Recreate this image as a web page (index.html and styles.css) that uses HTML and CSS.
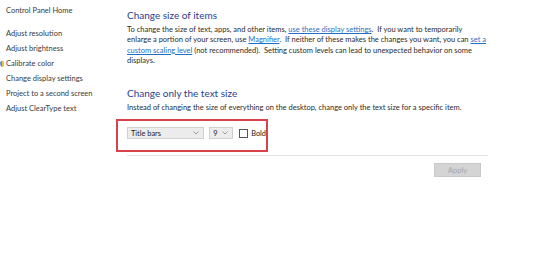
FILE: index.html
```html
<!DOCTYPE html>
<html>
<head>
<meta charset="utf-8">
<link rel="stylesheet" href="styles.css">
</head>
<body>
<div class="page">
  <nav class="side">
    <div class="home">Control Panel Home</div>
    <ul class="links">
      <li>Adjust resolution</li>
      <li>Adjust brightness</li>
      <li class="shield-item"><svg class="shield" width="4" height="6" viewBox="0 0 5 8"><path d="M0 1 L2.5 0 L5 1 L5 4 Q5 7 2.5 8 Q0 7 0 4 Z" fill="#3a6fc0"/><path d="M2.5 0 L5 1 L5 4 Q5 7 2.5 8 Z" fill="#e6b422"/></svg>Calibrate color</li>
      <li>Change display settings</li>
      <li>Project to a second screen</li>
      <li>Adjust ClearType text</li>
    </ul>
  </nav>
  <main class="main">
    <h1 class="title">Change size of items</h1>
    <p class="text">To change the size of text, apps, and other items, <a class="lnk">use these display settings</a>.&nbsp; If you want to temporarily<br>enlarge a portion of your screen, use <a class="lnk">Magnifier</a>.&nbsp; If neither of these makes the changes you want, you can <a class="lnk">set a<br>custom scaling level</a> (not recommended).&nbsp; Setting custom levels can lead to unexpected behavior on some<br>displays.</p>
    <h2 class="title title2">Change only the text size</h2>
    <p class="text">Instead of changing the size of everything on the desktop, change only the text size for a specific item.</p>
    <div class="highlight">
      <div class="controls">
        <div class="select sel-item"><span>Title bars</span><svg class="chev" width="6" height="4" viewBox="0 0 6 4"><path d="M0.5 0.5 L3 3 L5.5 0.5" fill="none" stroke="#888" stroke-width="0.8"/></svg></div>
        <div class="select sel-size"><span>9</span><svg class="chev" width="6" height="4" viewBox="0 0 6 4"><path d="M0.5 0.5 L3 3 L5.5 0.5" fill="none" stroke="#888" stroke-width="0.8"/></svg></div>
        <label class="check"><span class="box"></span>Bold</label>
      </div>
    </div>
    <div class="sep"></div>
    <div class="actions"><button class="apply">Apply</button></div>
  </main>
</div>
</body>
</html>
```
FILE: styles.css
```css
html, body {
  margin: 0;
  padding: 0;
  background: #ffffff;
}
body {
  font-family: Lato, "Noto Sans", sans-serif;
  color: #333333;
  width: 540px;
  height: 275px;
  overflow: hidden;
}
.page {
  display: flex;
}
.side {
  width: 127px;
  flex: none;
  padding: 3px 0 0 6px;
  box-sizing: border-box;
  font-size: 7.5px;
  color: #3a3a3a;
}
.home {
  line-height: 15px;
  margin-bottom: 8px;
}
.links {
  list-style: none;
  margin: 0;
  padding: 0;
}
.links li {
  line-height: 15px;
  position: relative;
}
.shield {
  position: absolute;
  left: -6px;
  top: 5px;
  opacity: 0.8;
}
.main {
  flex: 1;
  padding-top: 8px;
  font-size: 7.5px;
}
.title {
  margin: 0;
  font-weight: normal;
  font-size: 10px;
  line-height: 15px;
  color: #2a3d8f;
}
.title2 {
  margin-top: 20px;
}
.text {
  margin: 2px 0 0;
  width: 370px;
  white-space: nowrap;
  line-height: 10.3px;
  color: #2b2b2b;
}
.lnk {
  color: #1f6fc8;
  text-decoration: underline;
}
.highlight {
  width: 152px;
  height: 33px;
  margin: 6px 0 0 -11px;
  border: 2px solid #d8434a;
  box-sizing: border-box;
  padding: 6px 0 0 9px;
}
.controls {
  display: flex;
  align-items: center;
  gap: 5px;
}
.select {
  height: 12px;
  box-sizing: border-box;
  border: 1px solid #d0d0d0;
  background: #ececec;
  display: flex;
  align-items: center;
  justify-content: space-between;
  padding: 0 4px 0 3px;
  font-size: 7.4px;
  color: #222;
}
.sel-item { width: 78px; }
.sel-size { width: 24px; }
.check {
  display: flex;
  align-items: center;
  gap: 3px;
  font-size: 7.4px;
  color: #222;
  margin-left: 1px;
}
.box {
  width: 7px;
  height: 7px;
  border: 1px solid #555;
  background: #fff;
}
.sep {
  width: 361px;
  height: 1px;
  background: #e3e3e3;
  margin-top: 3px;
}
.actions {
  width: 354px;
  display: flex;
  justify-content: flex-end;
  margin-top: 7px;
}
.apply {
  width: 47px;
  height: 14px;
  padding: 0;
  border: 1px solid #c8c8c8;
  background: #d4d4d4;
  color: #a6a6a6;
  font-family: Lato, sans-serif;
  font-size: 7.5px;
}
```
